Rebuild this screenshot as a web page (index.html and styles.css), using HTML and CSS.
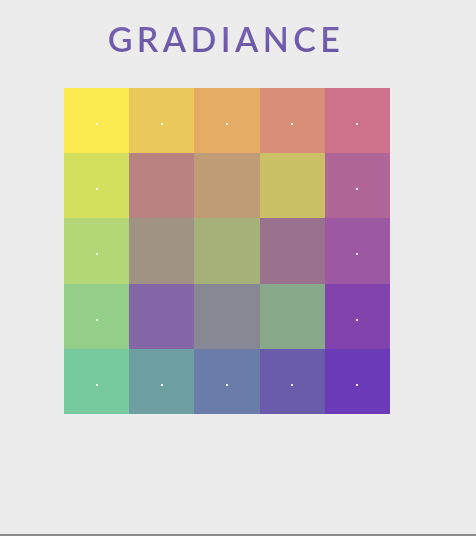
FILE: index.html
```html
<!DOCTYPE html>
<html>
<head>
<meta charset="utf-8">
<link rel="stylesheet" href="styles.css">
</head>
<body>
<div class="app">
  <h1 class="title">GRADIANCE</h1>
  <div class="grid">
    <div class="tile pin" style="background:#fbe950"></div>
    <div class="tile pin" style="background:#eac85b"></div>
    <div class="tile pin" style="background:#e5ac66"></div>
    <div class="tile pin" style="background:#d98f77"></div>
    <div class="tile pin" style="background:#ce728c"></div>

    <div class="tile pin" style="background:#d2e05e"></div>
    <div class="tile" style="background:#b88380"></div>
    <div class="tile" style="background:#c09c76"></div>
    <div class="tile" style="background:#cbc066"></div>
    <div class="tile pin" style="background:#b06698"></div>

    <div class="tile pin" style="background:#b3d676"></div>
    <div class="tile" style="background:#a09383"></div>
    <div class="tile" style="background:#a6b17a"></div>
    <div class="tile" style="background:#9b7190"></div>
    <div class="tile pin" style="background:#9c58a3"></div>

    <div class="tile pin" style="background:#94cf89"></div>
    <div class="tile" style="background:#8467a7"></div>
    <div class="tile" style="background:#888894"></div>
    <div class="tile" style="background:#89aa8a"></div>
    <div class="tile pin" style="background:#8244ac"></div>

    <div class="tile pin" style="background:#77c99e"></div>
    <div class="tile pin" style="background:#6e9fa0"></div>
    <div class="tile pin" style="background:#6a7caa"></div>
    <div class="tile pin" style="background:#6a5bab"></div>
    <div class="tile pin" style="background:#6b3ab8"></div>
  </div>
</div>
<div class="bottom"></div>
</body>
</html>
```

FILE: styles.css
```css
html, body {
  margin: 0;
  padding: 0;
  background: #ececec;
  height: 536px;
  overflow: hidden;
}
body {
  display: flex;
  flex-direction: column;
}
.app {
  flex: 1;
  width: 326px;
  padding-left: 64px;
  display: flex;
  flex-direction: column;
  align-items: center;
}
.title {
  margin: 21px 0 0 0;
  padding-right: 2px;
  height: 67px;
  font-family: "Lato", "Noto Sans", sans-serif;
  font-weight: 600;
  font-size: 34px;
  line-height: 36px;
  letter-spacing: 4.4px;
  background: linear-gradient(180deg, #7a62b2 0%, #5a4a9a 100%);
  -webkit-background-clip: text;
  background-clip: text;
  color: transparent;
}
.grid {
  width: 326px;
  height: 326px;
  display: grid;
  grid-template-columns: repeat(5, 1fr);
  grid-template-rows: repeat(5, 1fr);
}
.tile {
  display: flex;
  align-items: center;
  justify-content: center;
  padding-top: 7px;
}
.pin::after {
  content: "";
  width: 2px;
  height: 2px;
  background: #fff;
  opacity: 0.9;
}
.bottom {
  height: 2px;
  background: #8c8c8c;
}
```
